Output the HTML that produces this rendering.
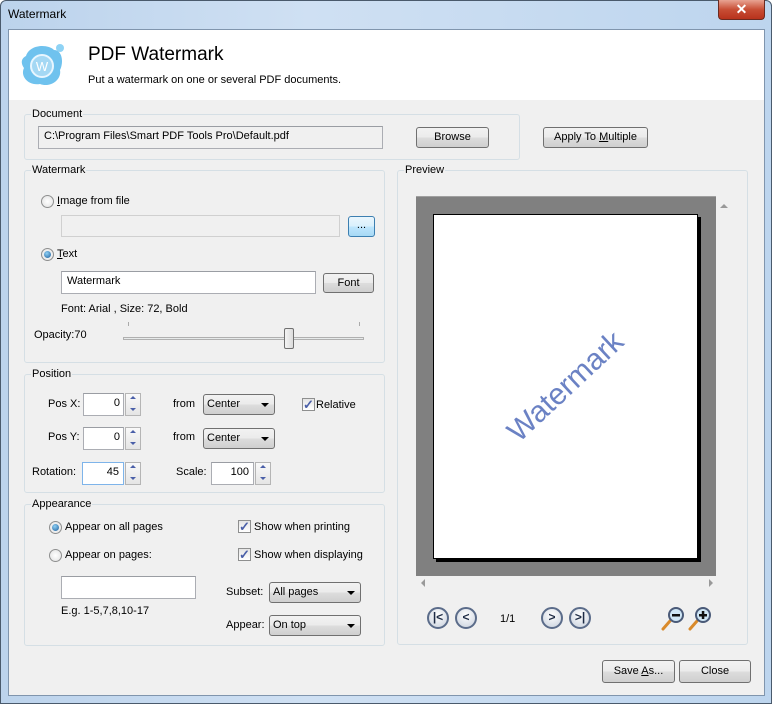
<!DOCTYPE html>
<html><head><meta charset="utf-8"><style>
*{box-sizing:border-box;margin:0;padding:0}
body{width:772px;height:704px;overflow:hidden;font-family:"Liberation Sans",sans-serif;font-size:11px;color:#000;background:#fff;position:relative}
.a{position:absolute}
.frame{left:0;top:0;width:772px;height:704px;background:linear-gradient(90deg,#bcd3ec,#cfe0f3 40%,#bdd5ee);border:1px solid #4a5a6c;border-radius:6px 6px 0 0}
.content{left:8px;top:29px;width:757px;height:667px;background:#f0f0f0;border:1px solid #8095ad}
.grp{position:absolute;border:1px solid #d5dfe5;border-radius:3px}
.gl{position:absolute;top:-8px;left:6px;background:#f0f0f0;padding:0 1px;line-height:14px}
.tb{position:absolute;background:#fff;border:1px solid #abadb3;border-top-color:#9a9da3}
.btn{position:absolute;border:1px solid #707070;border-radius:3px;background:linear-gradient(#f2f2f2,#ebebeb 50%,#dddddd 51%,#cfcfcf);text-align:center}
.cmb{position:absolute;border:1px solid #707070;border-radius:3px;background:linear-gradient(#f2f2f2,#ebebeb 50%,#dddddd 51%,#cfcfcf);padding-left:3px;line-height:18px}
.cmb:after{content:"";position:absolute;right:5px;top:8px;border:4px solid transparent;border-top:4px solid #000;border-bottom:0}
.spin{position:absolute;width:16px;border:1px solid #b5b5b5;background:linear-gradient(#fafafa,#e5e5e5)}
.spin i{position:absolute;left:4px;border:3px solid transparent}
.rad{position:absolute;width:13px;height:13px;border-radius:50%;border:1px solid #8e8f8f;background:radial-gradient(#fff,#e0e0e0)}
.rad.on:after{content:"";position:absolute;left:2px;top:2px;width:7px;height:7px;border-radius:50%;background:radial-gradient(circle at 40% 35%,#8fd0f5,#1c5d9a)}
.chk{position:absolute;width:13px;height:13px;border:1px solid #8e8f8f;background:linear-gradient(#e5e5e5,#fff);color:#4a5fa8;font-size:13px;line-height:11px;text-align:center;font-weight:bold}
.t{position:absolute;white-space:nowrap;line-height:14px}
.nav{position:absolute;width:22px;height:22px;border-radius:50%;border:2px solid #5b6c8a;background:radial-gradient(circle at 50% 35%,#fff,#c8d0dc);font-size:12px;font-weight:bold;line-height:17px;text-align:center;color:#1c2a44}
</style></head><body>
<div class="a frame"></div>
<div class="t" style="left:8px;top:7px;font-size:12px">Watermark</div>
<div class="a" style="left:718px;top:0;width:47px;height:20px;border:1px solid #6b2a20;border-top:0;border-radius:0 0 4px 4px;background:linear-gradient(#e8a493,#c84e35 50%,#b8321c);color:#fff;text-align:center;font-weight:bold;font-size:14px;line-height:18px">✕</div>
<div class="a content"></div>
<div class="a" style="left:9px;top:30px;width:755px;height:70px;background:#fff"></div>
<svg class="a" style="left:20px;top:42px" width="46" height="46" viewBox="0 0 46 46">
<path d="M6 14 C10 2 28 2 34 8 C42 8 44 20 40 28 C42 38 30 46 20 42 C8 44 0 34 4 26 C0 20 2 16 6 14Z" fill="#6fc2ee"/>
<circle cx="40" cy="6" r="4" fill="#8fd3f5"/>
<circle cx="22" cy="24" r="11" fill="#a4d8f4" stroke="#e8f6ff" stroke-width="2"/>
<text x="22" y="29" font-size="13" text-anchor="middle" fill="#fff" font-family="Liberation Sans">W</text>
</svg>
<div class="t" style="left:88px;top:43px;font-size:19px;line-height:24px">PDF Watermark</div>
<div class="t" style="left:88px;top:73px">Put a watermark on one or several PDF documents.</div>

<div class="grp" style="left:24px;top:114px;width:496px;height:46px"><div class="gl">Document</div></div>
<div class="tb" style="left:38px;top:126px;width:345px;height:23px;background:#f0f0f0;padding:3px 5px">C:\Program Files\Smart PDF Tools Pro\Default.pdf</div>
<div class="btn" style="left:416px;top:127px;width:73px;height:21px;line-height:19px">Browse</div>
<div class="btn" style="left:543px;top:127px;width:105px;height:21px;line-height:19px">Apply To <u>M</u>ultiple</div>

<div class="grp" style="left:24px;top:170px;width:361px;height:193px"><div class="gl">Watermark</div></div>
<div class="rad" style="left:41px;top:195px"></div><div class="t" style="left:57px;top:194px"><u>I</u>mage from file</div>
<div class="tb" style="left:61px;top:215px;width:279px;height:22px;background:#f0f0f0;border-color:#d0d0d0"></div>
<div class="btn" style="left:348px;top:216px;width:27px;height:21px;line-height:17px;border-color:#3c7fb1;background:linear-gradient(#eaf6fd,#d9f0fc 50%,#bee6fd 51%,#a7d9f5)">...</div>
<div class="rad on" style="left:41px;top:248px"></div><div class="t" style="left:57px;top:247px"><u>T</u>ext</div>
<div class="tb" style="left:61px;top:271px;width:255px;height:23px;padding:3px 5px">Watermark</div>
<div class="btn" style="left:323px;top:273px;width:51px;height:20px;line-height:18px">Font</div>
<div class="t" style="left:61px;top:302px">Font: Arial , Size: 72, Bold</div>
<div class="t" style="left:34px;top:328px">Opacity:70</div>
<div class="a" style="left:128px;top:322px;width:1px;height:4px;background:#aaa"></div>
<div class="a" style="left:359px;top:322px;width:1px;height:4px;background:#aaa"></div>
<div class="a" style="left:123px;top:337px;width:241px;height:3px;border:1px solid #b0b0b0;background:#e7eaea"></div>
<div class="a" style="left:284px;top:328px;width:10px;height:21px;border:1px solid #707070;border-radius:2px;background:linear-gradient(90deg,#f4f4f4,#dcdcdc)"></div>

<div class="grp" style="left:24px;top:374px;width:361px;height:119px"><div class="gl">Position</div></div>
<div class="t" style="left:48px;top:397px">Pos X:</div>
<div class="tb" style="left:83px;top:393px;width:41px;height:23px;text-align:right;padding:3px 3px">0</div>
<div class="spin" style="left:125px;top:393px;height:23px"><i style="top:2px;border-bottom:3px solid #4a5fa8;border-top:0"></i><i style="top:14px;border-top:3px solid #4a5fa8;border-bottom:0"></i></div>
<div class="t" style="left:173px;top:397px">from</div>
<div class="cmb" style="left:203px;top:394px;width:72px;height:21px">Center</div>
<div class="chk" style="left:302px;top:398px">✓</div><div class="t" style="left:316px;top:398px">Relative</div>
<div class="t" style="left:48px;top:430px">Pos Y:</div>
<div class="tb" style="left:83px;top:427px;width:41px;height:23px;text-align:right;padding:3px 3px">0</div>
<div class="spin" style="left:125px;top:427px;height:23px"><i style="top:2px;border-bottom:3px solid #4a5fa8;border-top:0"></i><i style="top:14px;border-top:3px solid #4a5fa8;border-bottom:0"></i></div>
<div class="t" style="left:173px;top:430px">from</div>
<div class="cmb" style="left:203px;top:428px;width:72px;height:21px">Center</div>
<div class="t" style="left:32px;top:465px">Rotation:</div>
<div class="tb" style="left:82px;top:462px;width:42px;height:23px;text-align:right;padding:3px 4px;border-color:#7eb4ea">45</div>
<div class="spin" style="left:125px;top:462px;height:23px"><i style="top:2px;border-bottom:3px solid #4a5fa8;border-top:0"></i><i style="top:14px;border-top:3px solid #4a5fa8;border-bottom:0"></i></div>
<div class="t" style="left:176px;top:465px">Scale:</div>
<div class="tb" style="left:211px;top:462px;width:43px;height:23px;text-align:right;padding:3px 4px">100</div>
<div class="spin" style="left:255px;top:462px;height:23px"><i style="top:2px;border-bottom:3px solid #4a5fa8;border-top:0"></i><i style="top:14px;border-top:3px solid #4a5fa8;border-bottom:0"></i></div>

<div class="grp" style="left:24px;top:504px;width:361px;height:142px"><div class="gl">Appearance</div></div>
<div class="rad on" style="left:49px;top:521px"></div><div class="t" style="left:65px;top:520px">Appear on all pages</div>
<div class="rad" style="left:49px;top:549px"></div><div class="t" style="left:65px;top:548px">Appear on pages:</div>
<div class="chk" style="left:238px;top:520px">✓</div><div class="t" style="left:254px;top:520px">Show when printing</div>
<div class="chk" style="left:238px;top:548px">✓</div><div class="t" style="left:254px;top:548px">Show when displaying</div>
<div class="tb" style="left:61px;top:576px;width:135px;height:23px"></div>
<div class="t" style="left:61px;top:604px">E.g. 1-5,7,8,10-17</div>
<div class="t" style="left:226px;top:585px">Subset:</div>
<div class="cmb" style="left:269px;top:582px;width:92px;height:21px">All pages</div>
<div class="t" style="left:226px;top:618px">Appear:</div>
<div class="cmb" style="left:269px;top:615px;width:92px;height:21px">On top</div>

<div class="grp" style="left:397px;top:170px;width:351px;height:475px"><div class="gl">Preview</div></div>
<div class="a" style="left:416px;top:196px;width:300px;height:380px;background:#808080;border-top:1px solid #a0a0a0"></div>
<div class="a" style="left:436px;top:217px;width:265px;height:345px;background:#000"></div>
<div class="a" style="left:433px;top:214px;width:265px;height:345px;background:#fff;border:1px solid #000"></div>
<div class="t" style="left:566px;top:387px;transform:translate(-50%,-50%) rotate(-43deg);font-size:30px;line-height:34px;color:#6b82c4">Watermark</div>
<div class="a" style="left:716px;top:196px;width:16px;height:380px;background:#f0f0f0"></div>
<div class="a" style="left:720px;top:204px;border:4px solid transparent;border-bottom:4px solid #999;border-top:0"></div>
<div class="a" style="left:416px;top:576px;width:300px;height:14px;background:#f0f0f0"></div>
<div class="a" style="left:421px;top:579px;border:4px solid transparent;border-right:4px solid #999;border-left:0"></div>
<div class="a" style="left:709px;top:579px;border:4px solid transparent;border-left:4px solid #999;border-right:0"></div>
<div class="nav" style="left:427px;top:607px">|&lt;</div>
<div class="nav" style="left:455px;top:607px">&lt;</div>
<div class="t" style="left:500px;top:612px">1/1</div>
<div class="nav" style="left:541px;top:607px">&gt;</div>
<div class="nav" style="left:569px;top:607px">&gt;|</div>
<svg class="a" style="left:660px;top:606px" width="56" height="26" viewBox="0 0 56 26">
<line x1="3" y1="23" x2="10" y2="15" stroke="#d98a2b" stroke-width="3" stroke-linecap="round"/>
<circle cx="16" cy="9" r="7" fill="#cfe6f5" stroke="#4a5a78" stroke-width="2"/>
<rect x="12" y="8" width="8" height="2.5" fill="#111"/>
<line x1="30" y1="23" x2="37" y2="15" stroke="#d98a2b" stroke-width="3" stroke-linecap="round"/>
<circle cx="43" cy="9" r="7" fill="#cfe6f5" stroke="#4a5a78" stroke-width="2"/>
<rect x="39" y="8" width="8" height="2.5" fill="#111"/><rect x="41.8" y="5" width="2.5" height="8" fill="#111"/>
</svg>
<div class="btn" style="left:602px;top:660px;width:73px;height:23px;line-height:21px">Save <u>A</u>s...</div>
<div class="btn" style="left:679px;top:660px;width:72px;height:23px;line-height:21px">Close</div>
</body></html>
